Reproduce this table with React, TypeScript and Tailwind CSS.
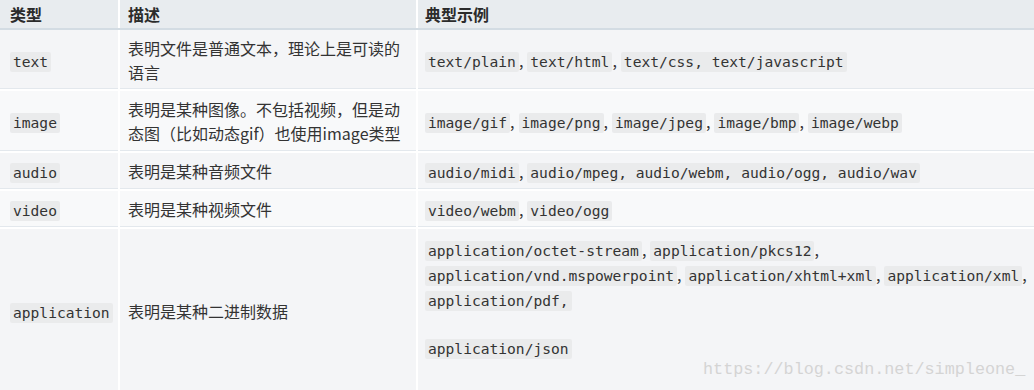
const cjk = "font-['Noto_Sans_CJK_SC',sans-serif]";

function Code({ children }: { children: React.ReactNode }) {
  return (
    <code className="inline-block rounded-[2px] bg-[#eaebec] px-[3px] py-[1px] font-['DejaVu_Sans_Mono',monospace] text-[14.6px] leading-[18px] text-[#333]">
      {children}
    </code>
  );
}

const Sep = () => <span className="mr-[4px]">,</span>;

const cell =
  "align-middle border-b-2 border-white shadow-[inset_0_-1px_0_#e3e8ed] p-0";

export default function App() {
  return (
    <div className={`relative w-[1034px] h-[390px] overflow-hidden bg-white ${cjk} text-[16px] text-[#333]`}>
      <table className="w-full border-collapse table-fixed">
        <colgroup>
          <col className="w-[119px]" />
          <col className="w-[298px]" />
          <col />
        </colgroup>
        <thead>
          <tr className="h-[29px] bg-[#e8ecef]">
            <th className="border-r-2 border-white border-b-2 border-b-[#d3dce3] pl-[10px] text-left font-bold leading-[24px] text-[#2b2b2b]">类型</th>
            <th className="border-r-2 border-white border-b-2 border-b-[#d3dce3] pl-[8px] text-left font-bold leading-[24px] text-[#2b2b2b]">描述</th>
            <th className="border-b-2 border-b-[#d3dce3] pl-[7px] text-left font-bold leading-[24px] text-[#2b2b2b]">典型示例</th>
          </tr>
        </thead>
        <tbody className="leading-[24px]">
          <tr className="h-[61px] bg-[#f4f5f7]">
            <td className={`${cell} border-r-2 border-r-white pl-[10px]`}><Code>text</Code></td>
            <td className={`${cell} border-r-2 border-r-white pl-[8px] pt-[1px]`}>
              表明文件是普通文本，理论上是可读的<br />语言
            </td>
            <td className={`${cell} pl-[7px]`}>
              <Code>text/plain</Code><Sep /><Code>text/html</Code><Sep /><Code>text/css, text/javascript</Code>
            </td>
          </tr>
          <tr className="h-[62px] bg-[#f8f9fa]">
            <td className={`${cell} border-r-2 border-r-white pl-[10px]`}><Code>image</Code></td>
            <td className={`${cell} border-r-2 border-r-white pl-[8px]`}>
              表明是某种图像。不包括视频，但是动<br />态图（比如动态gif）也使用image类型
            </td>
            <td className={`${cell} pl-[7px]`}>
              <Code>image/gif</Code><Sep /><Code>image/png</Code><Sep /><Code>image/jpeg</Code><Sep /><Code>image/bmp</Code><Sep /><Code>image/webp</Code>
            </td>
          </tr>
          <tr className="h-[38px] bg-[#f4f5f7]">
            <td className={`${cell} border-r-2 border-r-white pl-[10px]`}><Code>audio</Code></td>
            <td className={`${cell} border-r-2 border-r-white pl-[8px]`}>表明是某种音频文件</td>
            <td className={`${cell} pl-[7px]`}>
              <Code>audio/midi</Code><Sep /><Code>audio/mpeg, audio/webm, audio/ogg, audio/wav</Code>
            </td>
          </tr>
          <tr className="h-[38px] bg-[#f8f9fa]">
            <td className={`${cell} border-r-2 border-r-white pl-[10px]`}><Code>video</Code></td>
            <td className={`${cell} border-r-2 border-r-white pl-[8px]`}>表明是某种视频文件</td>
            <td className={`${cell} pl-[7px]`}>
              <Code>video/webm</Code><Sep /><Code>video/ogg</Code>
            </td>
          </tr>
          <tr className="h-[166px] bg-[#f4f5f7]">
            <td className={`${cell} border-r-2 border-r-white pl-[10px]`}><Code>application</Code></td>
            <td className={`${cell} border-r-2 border-r-white pl-[8px]`}>表明是某种二进制数据</td>
            <td className={`${cell} pl-[7px] align-top pt-[8px] leading-[25px]`}>
              <div>
                <Code>application/octet-stream</Code><Sep /><Code>application/pkcs12</Code>,<br />
                <Code>application/vnd.mspowerpoint</Code><Sep /><Code>application/xhtml+xml</Code><Sep /><Code>application/xml</Code>,<br />
                <Code>application/pdf,</Code>
              </div>
              <div className="mt-[23px]">
                <Code>application/json</Code>
              </div>
            </td>
          </tr>
        </tbody>
      </table>
      <div className="absolute left-[703px] top-[358px] font-['Liberation_Mono',monospace] text-[16.8px] leading-[24px] text-[#d4d4d4]">
        https://blog.csdn.net/simpleone_
      </div>
    </div>
  );
}
